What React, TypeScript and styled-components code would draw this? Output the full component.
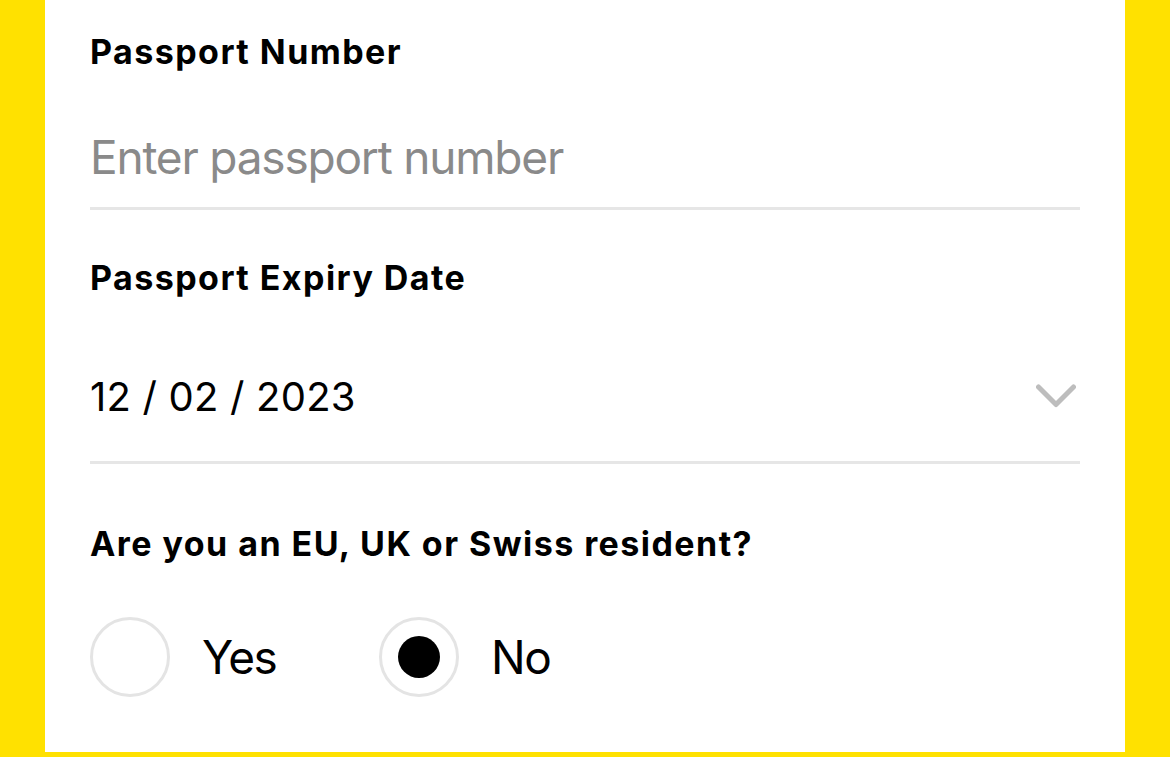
import styled, { createGlobalStyle } from 'styled-components';

const GlobalStyle = createGlobalStyle`
  html, body {
    margin: 0;
    padding: 0;
    background: #ffe100;
  }
  body {
    font-family: Inter, "Noto Sans", "Liberation Sans", sans-serif;
    -webkit-font-smoothing: antialiased;
  }
`;

function Chevron() {
  return (
    <ChevronIcon width="40" height="28" viewBox="0 0 40 28" fill="none">
      <polyline
        points="2.5,4 20,21.5 37.5,4"
        stroke="#bdbdbd"
        strokeWidth="5"
        strokeLinecap="round"
        strokeLinejoin="round"
      />
    </ChevronIcon>
  );
}

type RadioProps = { label: string; checked?: boolean };

function RadioOption({ label, checked }: RadioProps) {
  return (
    <Option>
      <Circle>{checked && <Dot />}</Circle>
      <OptionText>{label}</OptionText>
    </Option>
  );
}

export default function App() {
  return (
    <>
      <GlobalStyle />
      <Page>
        <Card>
          <Label>Passport Number</Label>
          <InputText>Enter passport number</InputText>
          <Divider />

          <Label $top={48}>Passport Expiry Date</Label>
          <DateRow>
            <DateText>12 / 02 / 2023</DateText>
            <Chevron />
          </DateRow>
          <Divider $top={39} />

          <Label $top={60}>Are you an EU, UK or Swiss resident?</Label>
          <RadioRow>
            <RadioOption label="Yes" />
            <RadioOption label="No" checked />
          </RadioRow>
        </Card>
      </Page>
    </>
  );
}

const Page = styled.div`
  padding: 0 45px 5px;
`;

const Card = styled.div`
  background: #ffffff;
  height: 752px;
  box-sizing: border-box;
  padding: 32px 45px 0;
  display: flex;
  flex-direction: column;
`;

const Label = styled.div<{ $top?: number }>`
  margin-top: ${(p) => p.$top ?? 0}px;
  font-size: 34px;
  line-height: 40px;
  font-weight: 700;
  color: #000;
  letter-spacing: 1.45px;
`;

const InputText = styled.div`
  margin-top: 57px;
  font-size: 46px;
  line-height: 56px;
  font-weight: 400;
  color: #8a8a8a;
  letter-spacing: -1.2px;
`;

const Divider = styled.div<{ $top?: number }>`
  margin-top: ${(p) => p.$top ?? 22}px;
  height: 3px;
  background: #e6e6e6;
`;

const DateRow = styled.div`
  margin-top: 74px;
  height: 50px;
  display: flex;
  align-items: center;
  justify-content: space-between;
`;

const DateText = styled.span`
  font-size: 40px;
  line-height: 50px;
  color: #000;
  letter-spacing: 0.2px;
`;

const ChevronIcon = styled.svg`
  margin-right: 4px;
`;

const RadioRow = styled.div`
  margin-top: 53px;
  display: flex;
`;

const Option = styled.div`
  width: 289px;
  display: flex;
  align-items: center;
  gap: 32px;
`;

const Circle = styled.div`
  width: 80px;
  height: 80px;
  box-sizing: border-box;
  border: 3px solid #e4e4e4;
  border-radius: 50%;
  display: flex;
  align-items: center;
  justify-content: center;
  flex-shrink: 0;
`;

const Dot = styled.div`
  width: 42px;
  height: 42px;
  border-radius: 50%;
  background: #000;
`;

const OptionText = styled.span`
  font-size: 46px;
  line-height: 56px;
  color: #000;
  letter-spacing: -1.5px;
`;
